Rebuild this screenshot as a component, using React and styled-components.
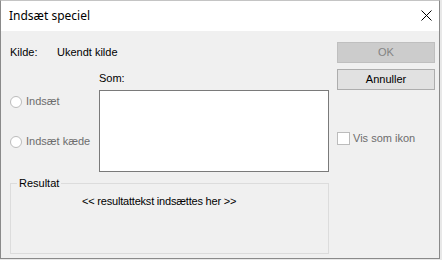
import React from "react";
import styled, { createGlobalStyle } from "styled-components";

const Global = createGlobalStyle`
  html, body { margin: 0; padding: 0; background: #e8e8e8; }
  body { font-family: "Liberation Sans", Arial, sans-serif; font-size: 11px; }
`;

const Window = styled.div`
  width: 440px;
  height: 259px;
  box-sizing: border-box;
  border: 1px solid #8a8a8a;
  border-top-color: #c4c4c4;
  background: #f0f0f0;
  display: flex;
  flex-direction: column;
`;

const TitleBar = styled.div`
  height: 30px;
  flex: none;
  background: #fff;
  display: flex;
  align-items: center;
  justify-content: space-between;
  padding: 0 7px 0 8px;
  font-family: "Segoe UI", "Noto Sans", sans-serif;
  font-size: 12px;
  color: #000;
`;

const Title = styled.span`
  line-height: 16px;
  margin-top: -1px;
`;

const CloseIcon = styled.svg`
  display: block;
  margin-top: -2px;
`;

const Content = styled.div`
  flex: 1;
  display: flex;
  padding: 11px 0 0 9px;
  gap: 8px;
  color: #000;
  line-height: 13px;
`;

const LeftPane = styled.div`
  width: 319px;
  display: flex;
  flex-direction: column;
  padding-top: 4px;
`;

const InfoRow = styled.div`
  display: flex;
  height: 13px;
`;

const InfoLabel = styled.span`
  width: 47px;
`;

const SomLabel = styled.div`
  margin: 13px 0 0 89px;
  height: 13px;
`;

const MiddleRow = styled.div`
  display: flex;
  margin-top: 5px;
`;

const RadioColumn = styled.div`
  width: 89px;
  display: flex;
  flex-direction: column;
  gap: 27px;
  padding-top: 5px;
`;

const RadioRow = styled.div`
  display: flex;
  align-items: center;
  gap: 4px;
  height: 13px;
  color: ${(p) => (p.disabled ? "#6d6d6d" : "#000")};
`;

const RadioCircle = styled.span`
  width: 10px;
  height: 10px;
  border: 1px solid #bcbcbc;
  border-radius: 50%;
  background: #fff;
  flex: none;
`;

const ListBox = styled.div`
  width: 230px;
  height: 82px;
  box-sizing: border-box;
  border: 1px solid #7a7a7a;
  background: #fff;
`;

const GroupBox = styled.div`
  position: relative;
  margin-top: 11px;
  height: 71px;
  box-sizing: border-box;
  border: 1px solid #dcdcdc;
  padding: 11px 0 0 71px;
`;

const GroupLegend = styled.span`
  position: absolute;
  top: -7px;
  left: 6px;
  padding: 0 2px;
  background: #f0f0f0;
`;

const ResultText = styled.span`
  letter-spacing: -0.2px;
`;

const RightPane = styled.div`
  width: 98px;
  display: flex;
  flex-direction: column;
`;

const Button = styled.div`
  height: 21px;
  box-sizing: border-box;
  display: flex;
  align-items: center;
  justify-content: center;
  border: 1px solid ${(p) => (p.disabled ? "#bfbfbf" : "#adadad")};
  background: ${(p) => (p.disabled ? "#cccccc" : "#e1e1e1")};
  color: ${(p) => (p.disabled ? "#838383" : "#000")};
  & + & {
    margin-top: 6px;
  }
`;

const CheckRow = styled.div`
  display: flex;
  align-items: center;
  gap: 3px;
  margin-top: 42px;
  height: 13px;
  color: #6d6d6d;
`;

const CheckBox = styled.span`
  width: 11px;
  height: 11px;
  border: 1px solid #bcbcbc;
  background: #fff;
  flex: none;
`;

export default function App() {
  return (
    <>
      <Global />
      <Window>
        <TitleBar>
          <Title>Indsæt speciel</Title>
          <CloseIcon width="11" height="11" viewBox="0 0 11 11">
            <path d="M0.5 0.5 L10.5 10.5 M10.5 0.5 L0.5 10.5" stroke="#000" strokeWidth="1" fill="none" />
          </CloseIcon>
        </TitleBar>
        <Content>
          <LeftPane>
            <InfoRow>
              <InfoLabel>Kilde:</InfoLabel>
              <span>Ukendt kilde</span>
            </InfoRow>
            <SomLabel>Som:</SomLabel>
            <MiddleRow>
              <RadioColumn>
                <RadioRow disabled>
                  <RadioCircle />
                  <span>Indsæt</span>
                </RadioRow>
                <RadioRow disabled>
                  <RadioCircle />
                  <span>Indsæt kæde</span>
                </RadioRow>
              </RadioColumn>
              <ListBox />
            </MiddleRow>
            <GroupBox>
              <GroupLegend>Resultat</GroupLegend>
              <ResultText>&lt;&lt; resultattekst indsættes her &gt;&gt;</ResultText>
            </GroupBox>
          </LeftPane>
          <RightPane>
            <Button disabled>OK</Button>
            <Button>Annuller</Button>
            <CheckRow>
              <CheckBox />
              <span>Vis som ikon</span>
            </CheckRow>
          </RightPane>
        </Content>
      </Window>
    </>
  );
}
